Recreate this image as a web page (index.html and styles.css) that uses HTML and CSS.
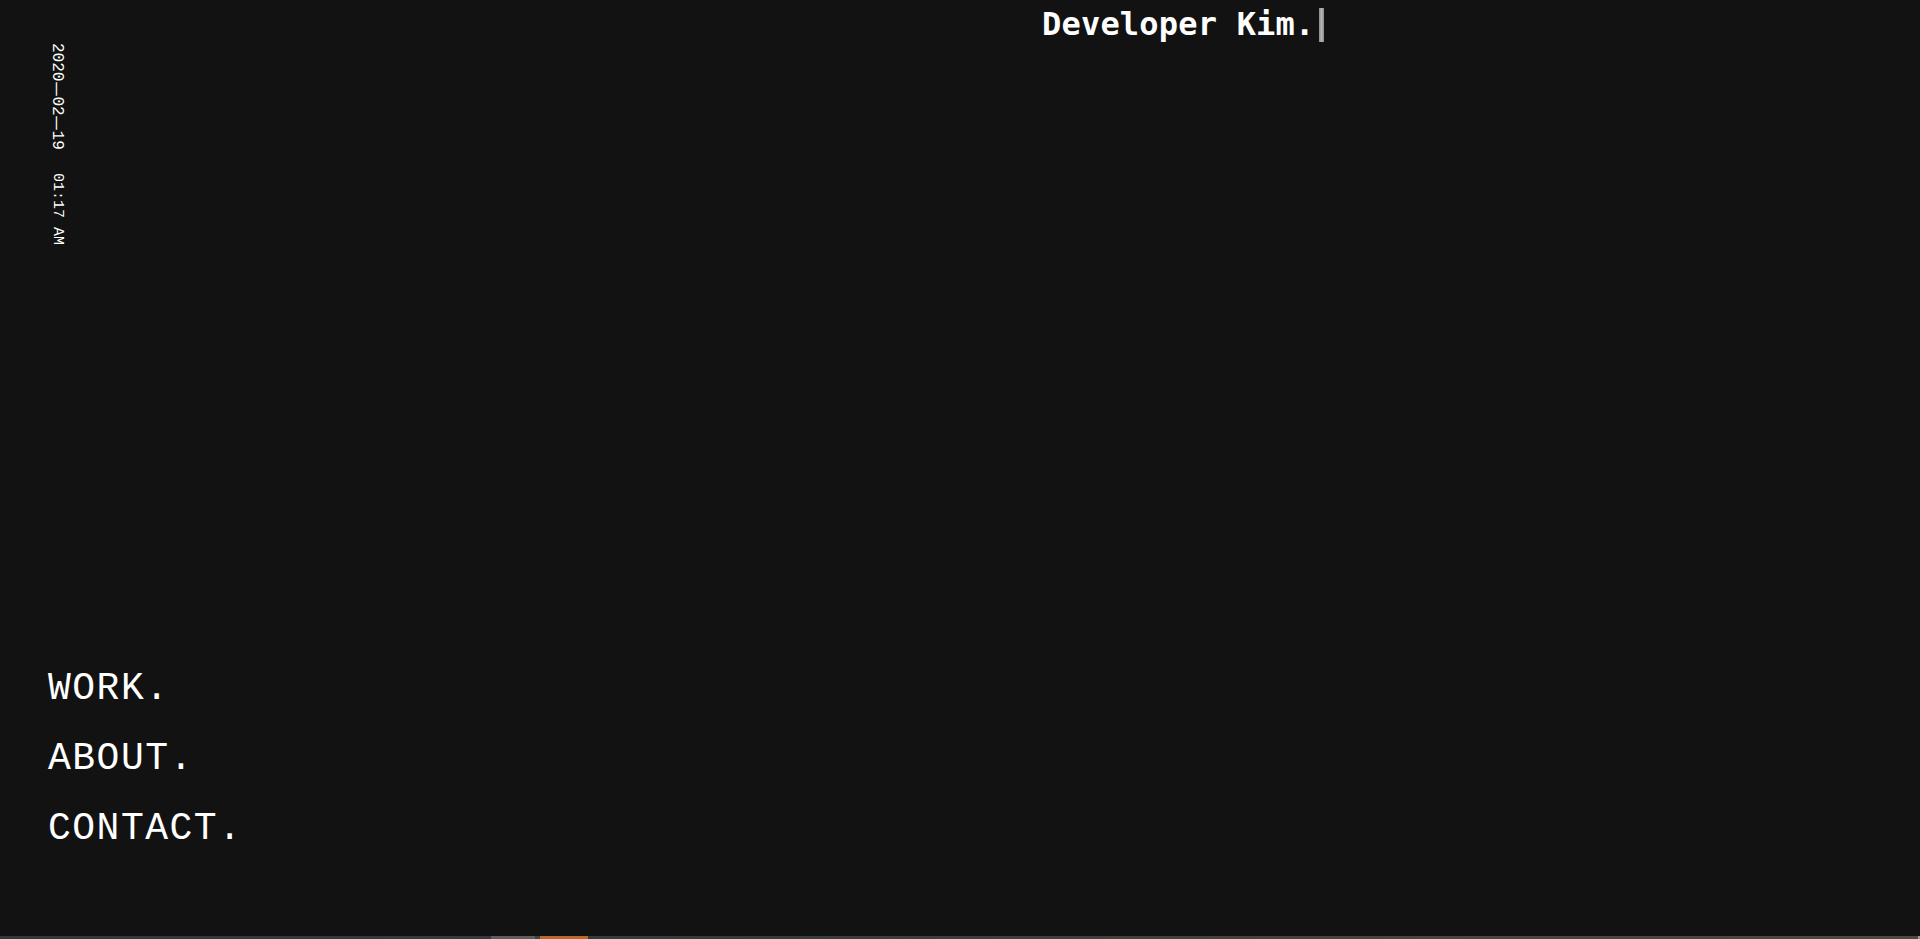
FILE: index.html
```html
<!DOCTYPE html>
<html lang="en">
<head>
<meta charset="utf-8">
<title>Developer Kim.</title>
<link rel="stylesheet" href="styles.css">
</head>
<body>
<div class="page">
  <header class="top">
    <h1 class="title">Developer Kim.</h1><span class="cursor"></span>
  </header>
  <div class="side">
    <div class="date"><span class="day">2020<span class="dash">—</span>02<span class="dash">—</span>19</span><span class="time">01:17 AM</span></div>
  </div>
  <div class="spacer"></div>
  <nav class="menu">
    <a class="menu-item" href="#">WORK.</a>
    <a class="menu-item" href="#">ABOUT.</a>
    <a class="menu-item" href="#">CONTACT.</a>
  </nav>
  <div class="bar">
    <span class="seg seg-a"></span>
    <span class="seg seg-b"></span>
    <span class="seg seg-c"></span>
    <span class="seg seg-d"></span>
    <span class="seg seg-e"></span>
    <span class="seg seg-f"></span>
  </div>
</div>
</body>
</html>
```
FILE: styles.css
```css
html, body {
  margin: 0;
  padding: 0;
  background: #121212;
  overflow: hidden;
}
.page {
  height: 939px;
  display: flex;
  flex-direction: column;
  color: #ffffff;
}
.top {
  height: 43px;
  display: flex;
  align-items: flex-start;
  padding-left: 1042px;
  flex: none;
}
.title {
  margin: 0;
  font-family: "DejaVu Sans Mono", monospace;
  font-weight: bold;
  font-size: 32px;
  line-height: 48px;
  letter-spacing: 0.2px;
  color: #ffffff;
}
.cursor {
  width: 5px;
  height: 34px;
  margin-top: 8px;
  margin-left: 4px;
  background: linear-gradient(90deg, #8c8c8c, #b4b4b4, #8c8c8c);
}
.side {
  flex: none;
  padding-left: 47px;
}
.date {
  writing-mode: vertical-rl;
  font-family: "Liberation Mono", monospace;
  font-size: 16px;
  line-height: 20px;
  color: #ffffff;
  white-space: nowrap;
}
.dash {
  font-family: "DejaVu Sans", sans-serif;
  font-size: 15px;
}
.time {
  font-size: 15px;
  margin-top: 23px;
}
.spacer {
  flex: 1;
}
.menu {
  flex: none;
  display: flex;
  flex-direction: column;
  padding-left: 48px;
  padding-bottom: 72px;
}
.menu-item {
  font-family: "Liberation Mono", monospace;
  font-size: 38px;
  letter-spacing: 1.5px;
  line-height: 70px;
  color: #ffffff;
  text-decoration: none;
}
.bar {
  flex: none;
  height: 3px;
  display: flex;
  background: linear-gradient(90deg, #2f3939 0%, #353d3b 40%, #464740 75%, #4a4942 100%);
}
.seg { display: block; height: 100%; }
.seg-a { width: 491px; }
.seg-b { width: 44px; background: #5b5e5d; }
.seg-c { width: 5px; background: #3c4442; }
.seg-d { width: 48px; background: #b8692b; }
.seg-e { flex: 1; }
.seg-f { width: 2px; background: #9a9a94; }
```
